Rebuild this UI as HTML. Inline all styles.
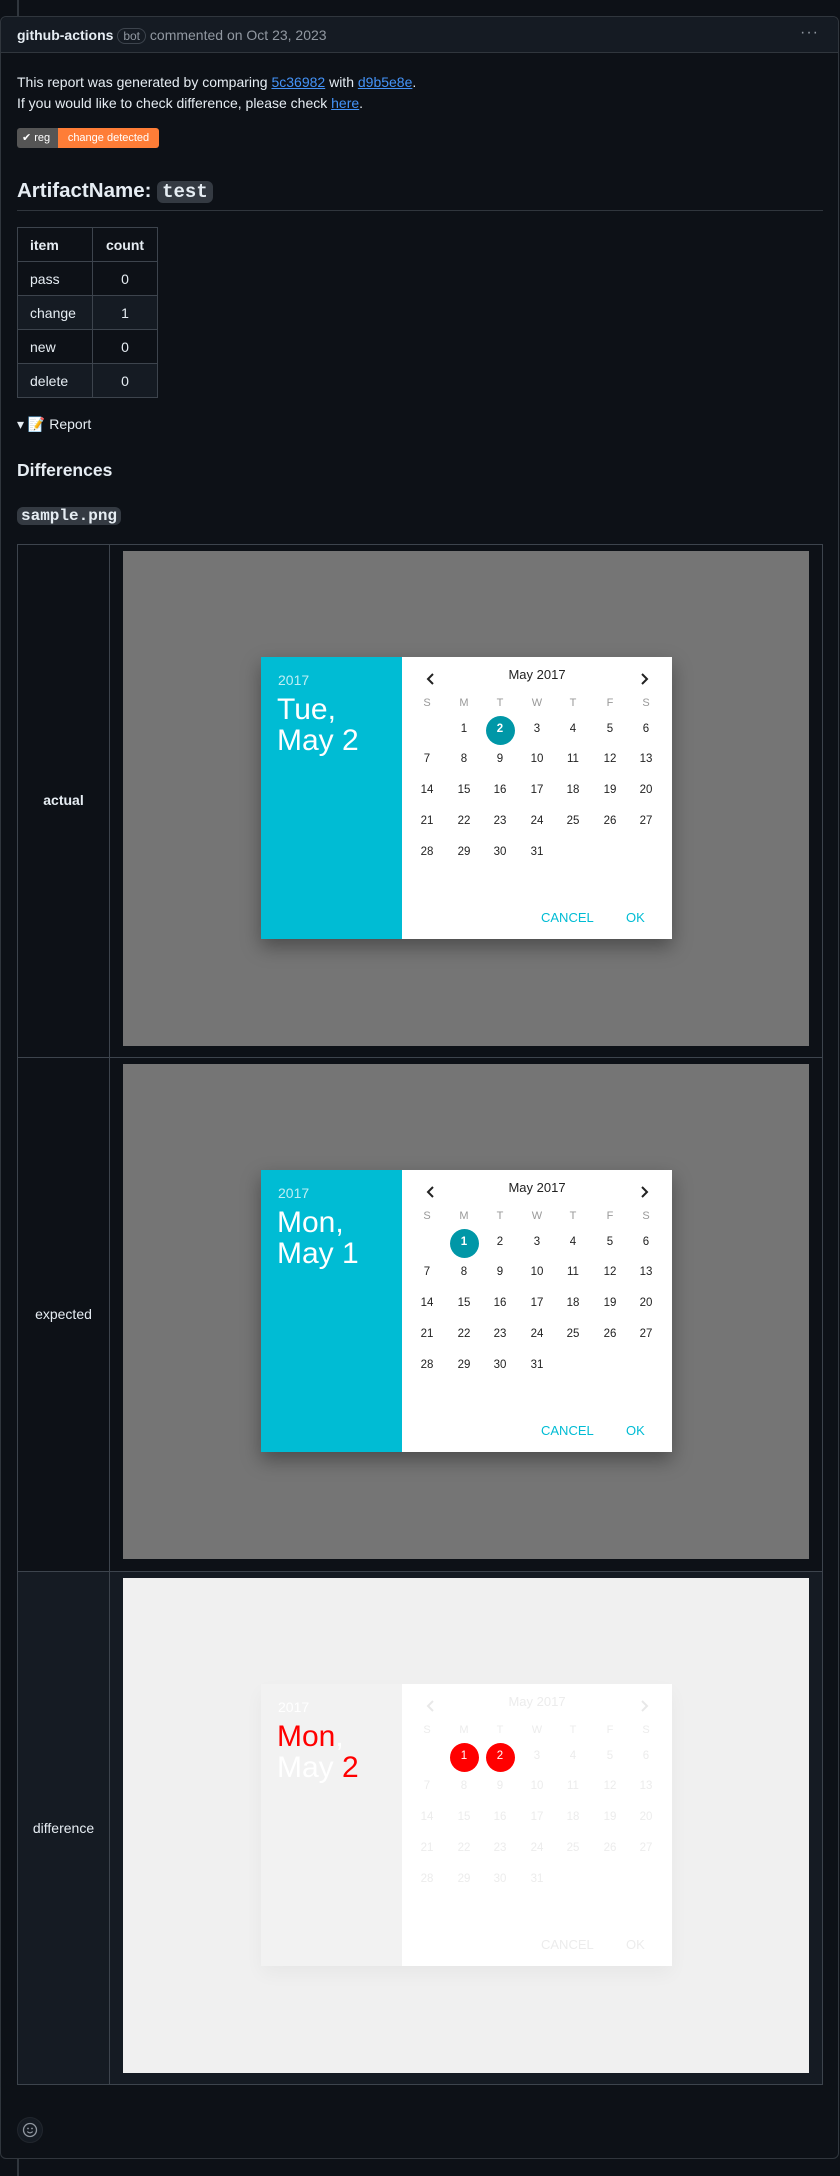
<!DOCTYPE html>
<html><head><meta charset="utf-8"><style>
*{box-sizing:border-box;margin:0;padding:0}
body{width:840px;height:2176px;background:#0d1117;font-family:"Liberation Sans",sans-serif;color:#e6edf3;font-size:14px;position:relative;overflow:hidden}
.abs{position:absolute}
a{color:#4493f8;text-decoration:underline}
.code{font-family:"Liberation Mono","DejaVu Sans Mono",monospace;background:#343a42;border-radius:6px;padding:0 5px}
table.t{position:absolute;left:17px;top:227px;border-collapse:collapse}
table.t td,table.t th{border:1px solid #3d444d;height:34px;padding:0 12px;text-align:left;font-size:14px}
table.t th{font-weight:bold}
table.t td.c,table.t th.c{text-align:center}
.cell{position:absolute;left:123px;width:686px;height:495px;overflow:hidden}
.dlg{position:absolute;left:138px;top:106px;width:411px;height:282px;background:#fff;box-shadow:0 8px 18px rgba(0,0,0,.35)}
.lp{position:absolute;left:0;top:0;width:141px;height:282px;background:#00bcd4;color:#fff}
.yr{position:absolute;left:17px;top:15px;font-size:14px;opacity:.75}
.dt{position:absolute;left:16px;top:37px;font-size:30px;line-height:31px}
.n{position:absolute;width:30px;margin-left:-15px;text-align:center;font-size:11.5px;color:#222}
.h{color:#999;font-size:11px}
.sel{position:absolute;width:29px;height:29px;border-radius:50%;background:#0097a7;margin:-14.5px 0 0 -14.5px}
.btn{position:absolute;color:#00bcd4;font-size:13px;top:253px}
.lbl{position:absolute;left:17px;width:93px;text-align:center;font-size:14px}
.f .n,.f .btn{color:#ececec}
.chev{position:absolute;top:16px}
</style></head><body>
<div class="abs" style="left:17px;top:0;width:2px;height:17px;background:#30363d"></div>
<div class="abs" style="left:17px;top:2158px;width:2px;height:18px;background:#30363d"></div>
<div class="abs" style="left:0;top:16px;width:839px;height:2143px;border:1px solid #30363d;border-radius:6px"></div>
<div class="abs" style="left:1px;top:17px;width:837px;height:36px;background:#151b23;border-bottom:1px solid #30363d;border-radius:6px 6px 0 0"></div>
<div class="abs" style="left:17px;top:26px;font-size:14px;line-height:18px"><b>github-actions</b> <span style="border:1px solid #3d444d;border-radius:10px;padding:0 5px;color:#9198a1;font-size:12px">bot</span> <span style="color:#9198a1">commented on Oct 23, 2023</span></div>
<div class="abs" style="left:800px;top:24px;color:#9198a1;font-size:16px;letter-spacing:1px">···</div>
<div class="abs" style="left:17px;top:72px;line-height:21px">This report was generated by comparing <a>5c36982</a> with <a>d9b5e8e</a>.<br>If you would like to check difference, please check <a>here</a>.</div>
<div class="abs" style="left:17px;top:128px;height:20px;font-size:11px;line-height:20px;border-radius:3px;overflow:hidden;display:flex"><span style="background:#555;color:#fff;padding:0 5px;width:41px">✔ reg</span><span style="background:#fe7d37;color:#fff;padding:0 6px;width:101px;text-align:center">change detected</span></div>
<div class="abs" style="left:17px;top:177px;font-size:20.5px;font-weight:bold;line-height:28px">ArtifactName: <span class="code" style="font-size:19px">test</span></div>
<div class="abs" style="left:17px;top:210px;width:806px;height:1px;background:#30363d"></div>
<table class="t">
<tr><th style="width:75px">item</th><th class="c" style="width:65px">count</th></tr>
<tr><td>pass</td><td class="c">0</td></tr>
<tr style="background:#151b23"><td>change</td><td class="c">1</td></tr>
<tr><td>new</td><td class="c">0</td></tr>
<tr style="background:#151b23"><td>delete</td><td class="c">0</td></tr>
</table>
<div class="abs" style="left:17px;top:416px;font-size:14px">▾ 📝 Report</div>
<div class="abs" style="left:17px;top:460px;font-size:17.5px;font-weight:bold">Differences</div>
<div class="abs" style="left:17px;top:505px;font-size:16px;font-weight:bold;line-height:21px"><span class="code" style="padding:0 4px">sample.png</span></div>

<div class="abs" style="left:17px;top:544px;width:806px;height:1541px;border:1px solid #3d444d"></div>
<div class="abs" style="left:18px;top:1571px;width:804px;height:513px;background:#151b23"></div>
<div class="abs" style="left:17px;top:1057px;width:806px;height:1px;background:#3d444d"></div>
<div class="abs" style="left:17px;top:1571px;width:806px;height:1px;background:#3d444d"></div>
<div class="abs" style="left:109px;top:544px;width:1px;height:1540px;background:#3d444d"></div>
<div class="lbl" style="top:792px;font-weight:bold">actual</div>
<div class="lbl" style="top:1306px">expected</div>
<div class="lbl" style="top:1820px">difference</div>

<div class="cell" style="top:551px;background:#757575">
<div class="dlg"><div class="lp"><div class="yr">2017</div><div class="dt">Tue,<br>May 2</div></div>
<div class="n" style="left:276px;top:10px;font-size:13px;width:80px;margin-left:-40px">May 2017</div>
<svg class="chev" style="left:165px" width="10" height="12"><path d="M7 1L2 6l5 5" fill="none" stroke="#222" stroke-width="2"/></svg>
<svg class="chev" style="left:378px" width="10" height="12"><path d="M3 1l5 5-5 5" fill="none" stroke="#222" stroke-width="2"/></svg>
<div class="sel" style="left:239px;top:73px"></div>
<div class="n h" style="left:166px;top:40px">S</div><div class="n h" style="left:203px;top:40px">M</div><div class="n h" style="left:239px;top:40px">T</div><div class="n h" style="left:276px;top:40px">W</div><div class="n h" style="left:312px;top:40px">T</div><div class="n h" style="left:349px;top:40px">F</div><div class="n h" style="left:385px;top:40px">S</div>
<div class="n" style="left:203px;top:66px">1</div><div class="n" style="left:239px;top:66px;color:#fff;font-weight:bold">2</div><div class="n" style="left:276px;top:66px">3</div><div class="n" style="left:312px;top:66px">4</div><div class="n" style="left:349px;top:66px">5</div><div class="n" style="left:385px;top:66px">6</div>
<div class="n" style="left:166px;top:96px">7</div><div class="n" style="left:203px;top:96px">8</div><div class="n" style="left:239px;top:96px">9</div><div class="n" style="left:276px;top:96px">10</div><div class="n" style="left:312px;top:96px">11</div><div class="n" style="left:349px;top:96px">12</div><div class="n" style="left:385px;top:96px">13</div>
<div class="n" style="left:166px;top:127px">14</div><div class="n" style="left:203px;top:127px">15</div><div class="n" style="left:239px;top:127px">16</div><div class="n" style="left:276px;top:127px">17</div><div class="n" style="left:312px;top:127px">18</div><div class="n" style="left:349px;top:127px">19</div><div class="n" style="left:385px;top:127px">20</div>
<div class="n" style="left:166px;top:158px">21</div><div class="n" style="left:203px;top:158px">22</div><div class="n" style="left:239px;top:158px">23</div><div class="n" style="left:276px;top:158px">24</div><div class="n" style="left:312px;top:158px">25</div><div class="n" style="left:349px;top:158px">26</div><div class="n" style="left:385px;top:158px">27</div>
<div class="n" style="left:166px;top:189px">28</div><div class="n" style="left:203px;top:189px">29</div><div class="n" style="left:239px;top:189px">30</div><div class="n" style="left:276px;top:189px">31</div>
<div class="btn" style="left:280px">CANCEL</div><div class="btn" style="left:365px">OK</div>
</div></div>

<div class="cell" style="top:1064px;background:#757575">
<div class="dlg"><div class="lp"><div class="yr">2017</div><div class="dt">Mon,<br>May 1</div></div>
<div class="n" style="left:276px;top:10px;font-size:13px;width:80px;margin-left:-40px">May 2017</div>
<svg class="chev" style="left:165px" width="10" height="12"><path d="M7 1L2 6l5 5" fill="none" stroke="#222" stroke-width="2"/></svg>
<svg class="chev" style="left:378px" width="10" height="12"><path d="M3 1l5 5-5 5" fill="none" stroke="#222" stroke-width="2"/></svg>
<div class="sel" style="left:203px;top:73px"></div>
<div class="n h" style="left:166px;top:40px">S</div><div class="n h" style="left:203px;top:40px">M</div><div class="n h" style="left:239px;top:40px">T</div><div class="n h" style="left:276px;top:40px">W</div><div class="n h" style="left:312px;top:40px">T</div><div class="n h" style="left:349px;top:40px">F</div><div class="n h" style="left:385px;top:40px">S</div>
<div class="n" style="left:203px;top:66px;color:#fff;font-weight:bold">1</div><div class="n" style="left:239px;top:66px">2</div><div class="n" style="left:276px;top:66px">3</div><div class="n" style="left:312px;top:66px">4</div><div class="n" style="left:349px;top:66px">5</div><div class="n" style="left:385px;top:66px">6</div>
<div class="n" style="left:166px;top:96px">7</div><div class="n" style="left:203px;top:96px">8</div><div class="n" style="left:239px;top:96px">9</div><div class="n" style="left:276px;top:96px">10</div><div class="n" style="left:312px;top:96px">11</div><div class="n" style="left:349px;top:96px">12</div><div class="n" style="left:385px;top:96px">13</div>
<div class="n" style="left:166px;top:127px">14</div><div class="n" style="left:203px;top:127px">15</div><div class="n" style="left:239px;top:127px">16</div><div class="n" style="left:276px;top:127px">17</div><div class="n" style="left:312px;top:127px">18</div><div class="n" style="left:349px;top:127px">19</div><div class="n" style="left:385px;top:127px">20</div>
<div class="n" style="left:166px;top:158px">21</div><div class="n" style="left:203px;top:158px">22</div><div class="n" style="left:239px;top:158px">23</div><div class="n" style="left:276px;top:158px">24</div><div class="n" style="left:312px;top:158px">25</div><div class="n" style="left:349px;top:158px">26</div><div class="n" style="left:385px;top:158px">27</div>
<div class="n" style="left:166px;top:189px">28</div><div class="n" style="left:203px;top:189px">29</div><div class="n" style="left:239px;top:189px">30</div><div class="n" style="left:276px;top:189px">31</div>
<div class="btn" style="left:280px">CANCEL</div><div class="btn" style="left:365px">OK</div>
</div></div>

<div class="cell" style="top:1578px;background:#f0f0f0">
<div class="dlg f" style="box-shadow:0 8px 18px rgba(0,0,0,.04)"><div class="lp" style="background:#f2f2f2"><div class="yr" style="opacity:1">2017</div><div class="dt"><span style="color:#f00">Mon</span>,<br>May <span style="color:#f00">2</span></div></div>
<div class="n" style="left:276px;top:10px;font-size:13px;width:80px;margin-left:-40px">May 2017</div>
<svg class="chev" style="left:165px" width="10" height="12"><path d="M7 1L2 6l5 5" fill="none" stroke="#e8e8e8" stroke-width="2"/></svg>
<svg class="chev" style="left:378px" width="10" height="12"><path d="M3 1l5 5-5 5" fill="none" stroke="#e8e8e8" stroke-width="2"/></svg>
<div class="sel" style="left:203px;top:73px;background:#f00"></div><div class="sel" style="left:239px;top:73px;background:#f00"></div>
<div class="n h" style="left:166px;top:40px">S</div><div class="n h" style="left:203px;top:40px">M</div><div class="n h" style="left:239px;top:40px">T</div><div class="n h" style="left:276px;top:40px">W</div><div class="n h" style="left:312px;top:40px">T</div><div class="n h" style="left:349px;top:40px">F</div><div class="n h" style="left:385px;top:40px">S</div>
<div class="n" style="left:203px;top:66px;color:#fff">1</div><div class="n" style="left:239px;top:66px;color:#fff">2</div><div class="n" style="left:276px;top:66px">3</div><div class="n" style="left:312px;top:66px">4</div><div class="n" style="left:349px;top:66px">5</div><div class="n" style="left:385px;top:66px">6</div>
<div class="n" style="left:166px;top:96px">7</div><div class="n" style="left:203px;top:96px">8</div><div class="n" style="left:239px;top:96px">9</div><div class="n" style="left:276px;top:96px">10</div><div class="n" style="left:312px;top:96px">11</div><div class="n" style="left:349px;top:96px">12</div><div class="n" style="left:385px;top:96px">13</div>
<div class="n" style="left:166px;top:127px">14</div><div class="n" style="left:203px;top:127px">15</div><div class="n" style="left:239px;top:127px">16</div><div class="n" style="left:276px;top:127px">17</div><div class="n" style="left:312px;top:127px">18</div><div class="n" style="left:349px;top:127px">19</div><div class="n" style="left:385px;top:127px">20</div>
<div class="n" style="left:166px;top:158px">21</div><div class="n" style="left:203px;top:158px">22</div><div class="n" style="left:239px;top:158px">23</div><div class="n" style="left:276px;top:158px">24</div><div class="n" style="left:312px;top:158px">25</div><div class="n" style="left:349px;top:158px">26</div><div class="n" style="left:385px;top:158px">27</div>
<div class="n" style="left:166px;top:189px">28</div><div class="n" style="left:203px;top:189px">29</div><div class="n" style="left:239px;top:189px">30</div><div class="n" style="left:276px;top:189px">31</div>
<div class="btn" style="left:280px">CANCEL</div><div class="btn" style="left:365px">OK</div>
</div></div>

<div class="abs" style="left:17px;top:2117px;width:26px;height:26px;border-radius:50%;background:#151b23;border:1px solid #21262d"></div>
<svg class="abs" style="left:22px;top:2122px" width="16" height="16" viewBox="0 0 16 16"><circle cx="8" cy="8" r="6.5" fill="none" stroke="#9198a1" stroke-width="1.3"/><circle cx="6" cy="6.5" r=".9" fill="#9198a1"/><circle cx="10" cy="6.5" r=".9" fill="#9198a1"/><path d="M5.3 9.6q2.7 2.6 5.4 0" fill="none" stroke="#9198a1" stroke-width="1.2"/></svg>
</body></html>
